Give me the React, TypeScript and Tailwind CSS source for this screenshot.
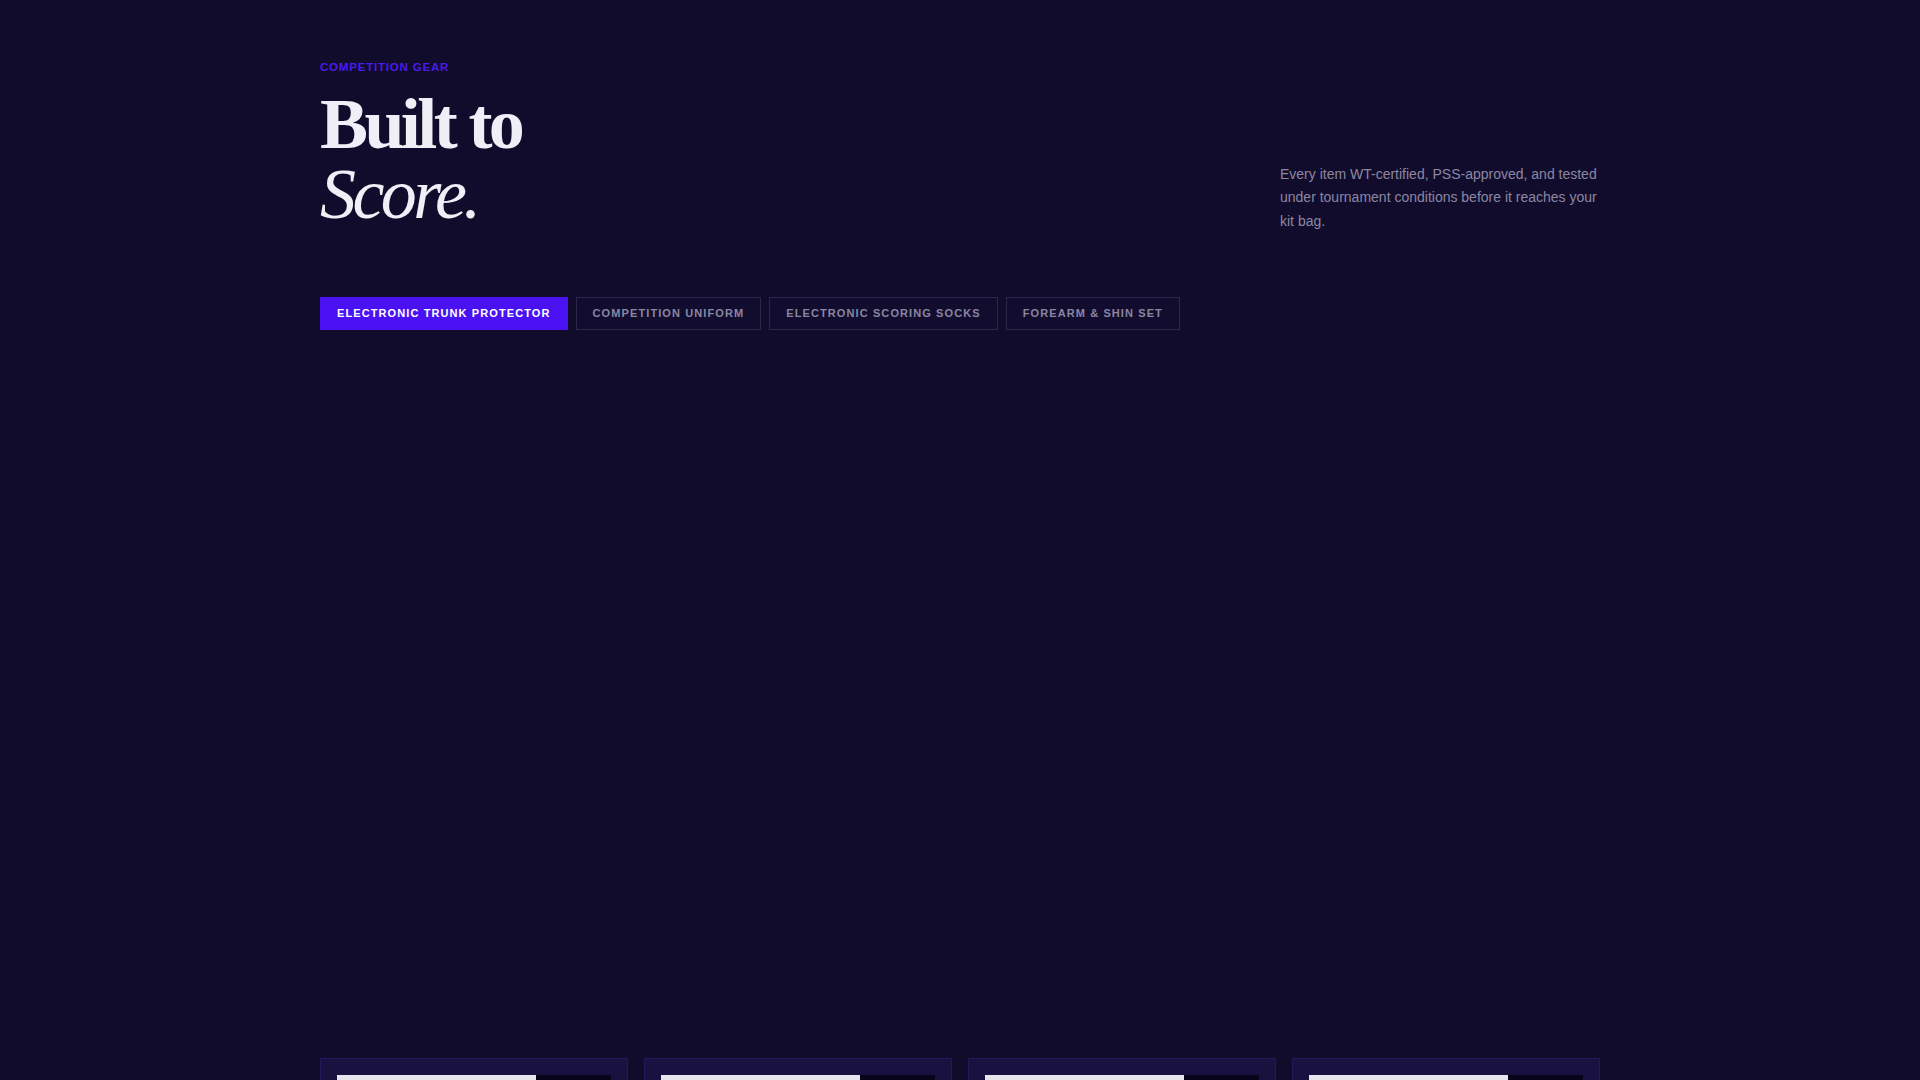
const tabs = [
  "Electronic Trunk Protector",
  "Competition Uniform",
  "Electronic Scoring Socks",
  "Forearm & Shin Set",
];

export default function App() {
  const active = 0;

  return (
    <main className="min-h-screen bg-[#110c2c] font-['Liberation_Sans',Arial,sans-serif]">
      <div className="mx-auto w-[1280px] pt-[59px]">
        {/* Header */}
        <div className="flex items-end justify-between">
          <div>
            <p className="text-[11.5px] font-bold uppercase leading-4 tracking-[0.07em] text-[#4b19ea]">
              Competition Gear
            </p>
            <h1 className="mt-[14px] font-['Liberation_Serif','Times_New_Roman',serif] text-[72px] leading-[70px] tracking-[-0.05em] text-[#f0eef6]">
              <span className="block font-bold">Built to</span>
              <span className="block italic">Score.</span>
            </h1>
          </div>
          <p className="mb-[-4px] w-[320px] text-[14px] leading-[23.5px] text-[#8b87a3]">
            Every item WT-certified, PSS-approved, and tested under tournament
            conditions before it reaches your kit bag.
          </p>
        </div>

        {/* Category tabs */}
        <div className="mt-[68px] flex gap-2">
          {tabs.map((tab, i) => (
            <button
              key={tab}
              type="button"
              className={
                i === active
                  ? "border border-[#4a12f2] bg-[#4a12f2] px-4 py-2 text-[11px] font-bold uppercase leading-[15px] tracking-[0.1em] text-white"
                  : "border border-[#2c2748] bg-[#120d2e] px-4 py-2 text-[11px] font-bold uppercase leading-[15px] tracking-[0.1em] text-[#8a86a2]"
              }
            >
              {tab}
            </button>
          ))}
        </div>

        {/* Product cards */}
        <div className="mt-[728px] grid grid-cols-4 gap-4">
          {tabs.map((tab) => (
            <div
              key={tab}
              className="border border-[#221a58] bg-[#19113f] p-4"
            >
              <div className="flex h-[240px]">
                <div className="w-[199px] bg-[#e7e5ee]" />
                <div className="flex-1 bg-[#08051a]" />
              </div>
            </div>
          ))}
        </div>
      </div>
    </main>
  );
}
